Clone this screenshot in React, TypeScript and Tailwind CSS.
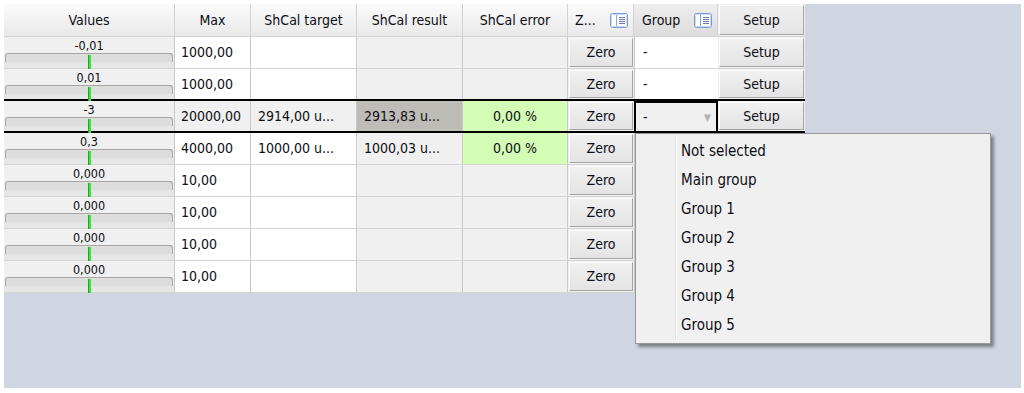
import React from "react";

const FONT = { fontFamily: '"DejaVu Sans Condensed", "DejaVu Sans", sans-serif' };

type Row = {
  v: string;
  max: string;
  target: string;
  result: string;
  error: string;
  maxBg: string;
  targetBg: string;
  resultBg: string;
  errorBg: string;
  selected?: boolean;
  covered?: boolean;
};

const rows: Row[] = [
  { v: "-0,01", max: "1000,00", target: "", result: "", error: "", maxBg: "bg-white", targetBg: "bg-white", resultBg: "bg-[#f0f0f0]", errorBg: "bg-[#f0f0f0]" },
  { v: "0,01", max: "1000,00", target: "", result: "", error: "", maxBg: "bg-white", targetBg: "bg-white", resultBg: "bg-[#f0f0f0]", errorBg: "bg-[#f0f0f0]" },
  { v: "-3", max: "20000,00", target: "2914,00 u...", result: "2913,83 u...", error: "0,00 %", maxBg: "bg-[#f0f0f0]", targetBg: "bg-[#f0f0f0]", resultBg: "bg-[#bdbcb6]", errorBg: "bg-[#d4fdb6]", selected: true },
  { v: "0,3", max: "4000,00", target: "1000,00 u...", result: "1000,03 u...", error: "0,00 %", maxBg: "bg-white", targetBg: "bg-white", resultBg: "bg-[#f0f0f0]", errorBg: "bg-[#d4fdb6]", covered: true },
  { v: "0,000", max: "10,00", target: "", result: "", error: "", maxBg: "bg-white", targetBg: "bg-white", resultBg: "bg-[#f0f0f0]", errorBg: "bg-[#f0f0f0]", covered: true },
  { v: "0,000", max: "10,00", target: "", result: "", error: "", maxBg: "bg-white", targetBg: "bg-white", resultBg: "bg-[#f0f0f0]", errorBg: "bg-[#f0f0f0]", covered: true },
  { v: "0,000", max: "10,00", target: "", result: "", error: "", maxBg: "bg-white", targetBg: "bg-white", resultBg: "bg-[#f0f0f0]", errorBg: "bg-[#f0f0f0]", covered: true },
  { v: "0,000", max: "10,00", target: "", result: "", error: "", maxBg: "bg-white", targetBg: "bg-white", resultBg: "bg-[#f0f0f0]", errorBg: "bg-[#f0f0f0]", covered: true },
];

function ColIcon() {
  return (
    <svg width="18" height="15" viewBox="0 0 18 15">
      <rect x="0.5" y="0.5" width="17" height="14" rx="2" fill="#f4f8ff" stroke="#7b9bd1" />
      <rect x="1.5" y="1.5" width="15" height="12" rx="1" fill="#ffffff" stroke="#c9d8f0" />
      <line x1="6.5" y1="2" x2="6.5" y2="13" stroke="#8aa6d6" />
      <line x1="9" y1="4.5" x2="15" y2="4.5" stroke="#6b7fa6" />
      <line x1="9" y1="6.5" x2="15" y2="6.5" stroke="#6b7fa6" />
      <line x1="9" y1="8.5" x2="15" y2="8.5" stroke="#6b7fa6" />
      <line x1="9" y1="10.5" x2="15" y2="10.5" stroke="#6b7fa6" />
    </svg>
  );
}

function HeaderCell({ w, children, extra = "" }: { w: string; children: React.ReactNode; extra?: string }) {
  return (
    <div className={`${w} h-full shrink-0 flex items-center justify-center border-r border-b border-[#d2d2d2] bg-gradient-to-b from-[#fbfbfb] to-[#e9e9e9] ${extra}`}>
      {children}
    </div>
  );
}

function Btn({ label }: { label: string }) {
  return (
    <div className="flex-1 m-[1px] flex items-center justify-center border border-t-[#fdfdfd] border-l-[#fdfdfd] border-r-[#a3a3a3] border-b-[#a3a3a3] bg-gradient-to-b from-[#f0f0f0] to-[#e4e4e4] text-[14px] text-[#0d0d14]">
      {label}
    </div>
  );
}

function ValueCell({ v }: { v: string }) {
  return (
    <div className="w-[171px] shrink-0 h-full flex flex-col bg-[#f0f0f0] border-r border-[#c8c8c8]">
      <div className="h-[15px] flex items-end justify-center text-[12.5px] leading-[13px] text-[#0d0d14]">{v}</div>
      <div className="relative mx-[1px] h-[9px] mt-[1px] rounded-t-[3px] border border-b-0 border-[#a5a5a5] bg-[#dddddd]">
        <div className="absolute left-[82px] top-[1px] w-[3px] h-[14px] bg-[#3ee23e] border-l border-[#1fa81f]" />
      </div>
      <div className="flex-1 bg-[#e6e6e6]" />
    </div>
  );
}

export default function App() {
  return (
    <div className="w-[1024px] h-[393px] bg-white pt-[4px] pl-[4px]" style={FONT}>
      <div className="relative w-[1017px] h-[384px] bg-[#cfd6e2]">
        <div className="w-[801px] flex flex-col">
          {/* header */}
          <div className="h-[33px] flex text-[14px] text-[#0d0d14]">
            <HeaderCell w="w-[171px]">Values</HeaderCell>
            <HeaderCell w="w-[76px]">Max</HeaderCell>
            <HeaderCell w="w-[106px]">ShCal target</HeaderCell>
            <HeaderCell w="w-[106px]">ShCal result</HeaderCell>
            <HeaderCell w="w-[105px]">ShCal error</HeaderCell>
            <HeaderCell w="w-[66px]" extra="!justify-between pl-[7px] pr-[5px]">
              <span>Z...</span>
              <ColIcon />
            </HeaderCell>
            <HeaderCell w="w-[84px]" extra="!justify-between pl-[8px] pr-[5px] !from-[#eeeeee] !to-[#dcdcdc]">
              <span>Group</span>
              <ColIcon />
            </HeaderCell>
            <div className="w-[87px] h-full shrink-0 flex border-b border-[#d2d2d2] bg-[#f0f0f0]">
              <Btn label="Setup" />
            </div>
          </div>
          {/* rows */}
          {rows.map((r, i) => {
            const nextSel = rows[i + 1]?.selected;
            const bottom = r.selected || nextSel ? "border-b-2 border-b-black" : "border-b border-b-[#d4d4d4]";
            return (
              <div key={i} className={`h-[32px] flex text-[14px] text-[#0d0d14] ${bottom}`}>
                <ValueCell v={r.v} />
                <div className={`w-[76px] shrink-0 flex items-center pl-[6px] border-r border-[#c8c8c8] ${r.maxBg}`}>{r.max}</div>
                <div className={`w-[106px] shrink-0 flex items-center pl-[7px] border-r border-[#c8c8c8] ${r.targetBg}`}>{r.target}</div>
                <div className={`w-[106px] shrink-0 flex items-center pl-[7px] border-r border-[#c8c8c8] ${r.resultBg}`}>{r.result}</div>
                <div className={`w-[105px] shrink-0 flex items-center justify-center border-r border-[#c8c8c8] ${r.errorBg}`}>{r.error}</div>
                <div className="w-[66px] shrink-0 flex bg-[#f0f0f0]">
                  <Btn label="Zero" />
                </div>
                {r.selected ? (
                  <div className="w-[84px] shrink-0 flex items-center justify-between pl-[7px] pr-[5px] bg-[#f0f0f0] border-2 border-black border-b-0">
                    <span>-</span>
                    <span className="text-[10px] text-[#b5b5b5]">▼</span>
                  </div>
                ) : (
                  <div className="w-[84px] shrink-0 flex items-center pl-[8px] bg-white border-l border-[#c8c8c8]">{r.covered ? "" : "-"}</div>
                )}
                <div className="w-[87px] shrink-0 flex bg-[#f0f0f0]">
                  <Btn label={r.covered ? "" : "Setup"} />
                </div>
              </div>
            );
          })}
        </div>

        {/* dropdown menu */}
        <div className="absolute left-[631px] top-[129px] w-[356px] h-[211px] bg-[#f0f0f0] border border-[#979797] shadow-[3px_3px_3px_rgba(0,0,0,0.4)] flex pt-[3px] pb-[3px]">
          <div className="w-[40px] shrink-0 border-r border-r-[#e0e0e0] shadow-[1px_0_0_#ffffff]" />
          <div className="flex-1 flex flex-col pl-[5px] text-[15px] text-[#0d0d14]">
            {["Not selected", "Main group", "Group 1", "Group 2", "Group 3", "Group 4", "Group 5"].map((t) => (
              <div key={t} className="h-[29px] flex items-center">{t}</div>
            ))}
          </div>
        </div>
      </div>
    </div>
  );
}
